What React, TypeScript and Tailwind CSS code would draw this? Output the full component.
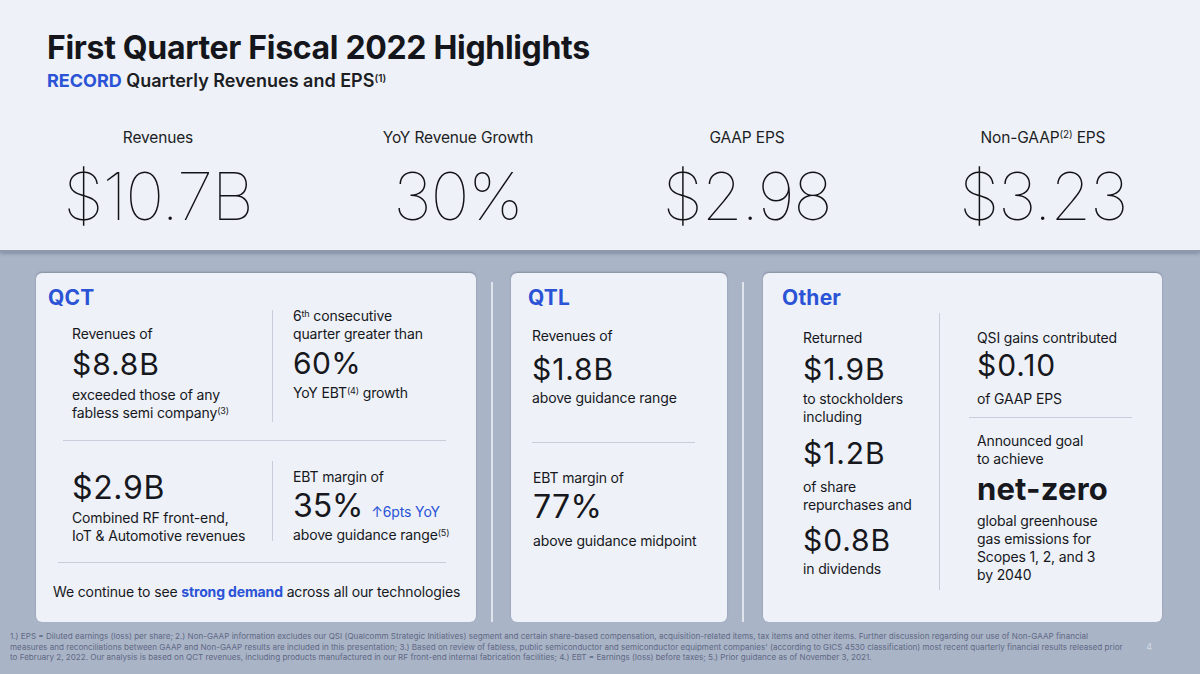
import React from 'react';

// Slide: Q1 FY2022 highlights

const stats = [
  { label: 'Revenues', value: '$10.7B' },
  { label: 'YoY Revenue Growth', value: '30%' },
  { label: 'GAAP EPS', value: '$2.98' },
  { label: 'Non-GAAP', sup: '(2)', after: ' EPS', value: '$3.23' },
];

function Rule({ className = '' }: { className?: string }) {
  return <div className={`h-px bg-[#c7ceda] ${className}`} />;
}

function VLine({ className = '' }: { className?: string }) {
  return <div className={`w-px bg-[#c7ceda] ${className}`} />;
}

function CardTitle({ children }: { children: React.ReactNode }) {
  return (
    <div className="text-[21px] leading-[18px] font-bold text-[#2a53d6] tracking-[0.01em]">
      {children}
    </div>
  );
}

function QctCard() {
  return (
    <div className="w-[440px] h-[349px] shrink-0 rounded-[6px] bg-[#eef1f7] shadow-[0_-1px_2px_rgba(60,70,90,0.35)] pl-[12px] pt-[16px]">
      <CardTitle>QCT</CardTitle>
      {/* top row */}
      <div className="flex items-start pl-[24px]">
        <div className="w-[200px] pt-[18px]">
          <div>Revenues of</div>
          <div className="text-[30px] leading-[34px] mt-[4px] tracking-[0.03em]">$8.8B</div>
          <div className="mt-[5px]">exceeded those of any</div>
          <div>
            fabless semi company<sup className="text-[9px]">(3)</sup>
          </div>
        </div>
        <VLine className="h-[112px] mt-[3px]" />
        <div className="pl-[20px]">
          <div>
            6<sup className="text-[9px]">th</sup> consecutive
          </div>
          <div>quarter greater than</div>
          <div className="text-[30px] leading-[34px] mt-[3px] tracking-[0.01em]">60%</div>
          <div className="mt-[4px]">
            YoY EBT<sup className="text-[9px]">(4)</sup> growth
          </div>
        </div>
      </div>
      <Rule className="ml-[15px] mr-[30px] mt-[18px]" />
      {/* bottom row */}
      <div className="flex items-start pl-[24px] mt-[20px]">
        <div className="w-[200px] pt-[9px]">
          <div className="text-[32px] leading-[36px] tracking-[0.02em]">$2.9B</div>
          <div className="mt-[3px]">Combined RF front-end,</div>
          <div>IoT &amp; Automotive revenues</div>
        </div>
        <VLine className="h-[80px]" />
        <div className="pl-[20px] pt-[7px]">
          <div>EBT margin of</div>
          <div className="flex items-baseline mt-[2px]">
            <span className="text-[32px] leading-[36px]">35%</span>
            <span className="ml-[8px] text-[14px] text-[#2a53d6]">↑6pts YoY</span>
          </div>
          <div className="mt-[2px]">
            above guidance range<sup className="text-[9px]">(5)</sup>
          </div>
        </div>
      </div>
      <Rule className="ml-[10px] mr-[30px] mt-[17px]" />
      <div className="mt-[20px] pl-[5px] whitespace-nowrap">
        We continue to see <span className="font-bold text-[#2a53d6]">strong demand</span> across all our
        technologies
      </div>
    </div>
  );
}

function QtlCard() {
  return (
    <div className="w-[216px] h-[349px] shrink-0 rounded-[6px] bg-[#eef1f7] shadow-[0_-1px_2px_rgba(60,70,90,0.35)] pl-[17px] pt-[16px]">
      <CardTitle>QTL</CardTitle>
      <div className="pl-[4px] pt-[20px]">
        <div>Revenues of</div>
        <div className="text-[30px] leading-[34px] mt-[7px] tracking-[0.03em]">$1.8B</div>
        <div className="mt-[3px]">above guidance range</div>
      </div>
      <Rule className="ml-[4px] mr-[32px] mt-[35px]" />
      <div className="pl-[5px] pt-[26px]">
        <div>EBT margin of</div>
        <div className="text-[32px] leading-[36px] mt-[2px] tracking-[0.01em]">77%</div>
        <div className="mt-[7px]">above guidance midpoint</div>
      </div>
    </div>
  );
}

function OtherCard() {
  return (
    <div className="w-[399px] h-[349px] shrink-0 rounded-[6px] bg-[#eef1f7] shadow-[0_-1px_2px_rgba(60,70,90,0.35)] pl-[19px] pt-[16px]">
      <CardTitle>Other</CardTitle>
      <div className="flex items-start">
        <div className="w-[157px] pl-[21px] pt-[22px]">
          <div>Returned</div>
          <div className="text-[30px] leading-[34px] mt-[5px] tracking-[0.03em]">$1.9B</div>
          <div className="mt-[4px]">to stockholders</div>
          <div>including</div>
          <div className="text-[30px] leading-[34px] mt-[10px] tracking-[0.03em]">$1.2B</div>
          <div className="mt-[8px]">of share</div>
          <div>repurchases and</div>
          <div className="text-[30px] leading-[34px] mt-[9px] tracking-[0.03em]">$0.8B</div>
          <div className="mt-[3px]">in dividends</div>
        </div>
        <VLine className="h-[277px] mt-[6px]" />
        <div className="pl-[37px] pt-[22px]">
          <div>QSI gains contributed</div>
          <div className="text-[30px] leading-[34px] mt-[1px] tracking-[0.03em]">$0.10</div>
          <div className="mt-[8px]">of GAAP EPS</div>
          <Rule className="w-[163px] -ml-[8px] mt-[9px]" />
          <div className="mt-[14px]">Announced goal</div>
          <div>to achieve</div>
          <div className="text-[31px] leading-[36px] font-bold tracking-[0.005em] mt-[3px]">net-zero</div>
          <div className="mt-[5px]">global greenhouse</div>
          <div>gas emissions for</div>
          <div>Scopes 1, 2, and 3</div>
          <div>by 2040</div>
        </div>
      </div>
    </div>
  );
}

export default function App() {
  return (
    <div className="w-[1200px] h-[674px] overflow-hidden bg-[#aab4c7] text-[#16181d] font-['Inter',sans-serif] text-[14px] leading-[18px] tracking-[-0.01em]">
      {/* header band */}
      <div className="h-[252px] bg-[#eef1f7] border-b-[2px] border-[#8f99ac] shadow-[0_2px_3px_rgba(40,50,70,0.25)]">
        <div className="pl-[47px] pt-[29px]">
          <h1 className="text-[32px] leading-[38px] font-bold tracking-[-0.01em] text-[#14161b]">
            First Quarter Fiscal 2022 Highlights
          </h1>
          <p className="mt-[3px] text-[18px] leading-[22px] font-semibold tracking-normal text-[#1c1e24]">
            <span className="font-bold text-[#2a53d6]">RECORD</span> Quarterly Revenues and EPS
            <sup className="text-[10px]">(1)</sup>
          </p>
        </div>
        <div className="ml-[8px] mt-[36px] grid grid-cols-[300px_300px_278px_314px]">
          {stats.map((s) => (
            <div key={s.value} className="flex flex-col items-center">
              <div className="text-[15.5px] leading-[20px] text-[#1c1e24]">
                {s.label}
                {s.sup && <sup className="text-[10px]">{s.sup}</sup>}
                {s.after}
              </div>
              <div className="mt-[10px] text-[66px] leading-[76px] font-thin tracking-[-0.02em] text-[#111317]">
                {s.value}
              </div>
            </div>
          ))}
        </div>
      </div>

      {/* segment cards */}
      <div className="flex pl-[36px] pt-[21px]">
        <QctCard />
        <div className="w-[2px] h-[340px] mt-[9px] ml-[15px] mr-[18px] bg-[#dfe4ed]" />
        <QtlCard />
        <div className="w-[2px] h-[340px] mt-[9px] ml-[15px] mr-[19px] bg-[#dfe4ed]" />
        <OtherCard />
      </div>

      {/* footnotes */}
      <div className="flex items-center pl-[10px] pt-[9px]">
        <div className="text-[8.1px] leading-[10.5px] tracking-normal text-[#5f6985] whitespace-nowrap">
          <div>
            1.) EPS = Diluted earnings (loss) per share; 2.) Non-GAAP information excludes our QSI (Qualcomm Strategic
            Initiatives) segment and certain share-based compensation, acquisition-related items, tax items and other
            items. Further discussion regarding our use of Non-GAAP financial
          </div>
          <div>
            measures and reconciliations between GAAP and Non-GAAP results are included in this presentation; 3.) Based
            on review of fabless, public semiconductor and semiconductor equipment companies' (according to GICS 4530
            classification) most recent quarterly financial results released prior
          </div>
          <div>
            to February 2, 2022. Our analysis is based on QCT revenues, including products manufactured in our RF
            front-end internal fabrication facilities; 4.) EBT = Earnings (loss) before taxes; 5.) Prior guidance as of
            November 3, 2021.
          </div>
        </div>
        <div className="ml-auto mr-[48px] text-[9px] text-[#d3d9e4]">4</div>
      </div>
    </div>
  );
}
